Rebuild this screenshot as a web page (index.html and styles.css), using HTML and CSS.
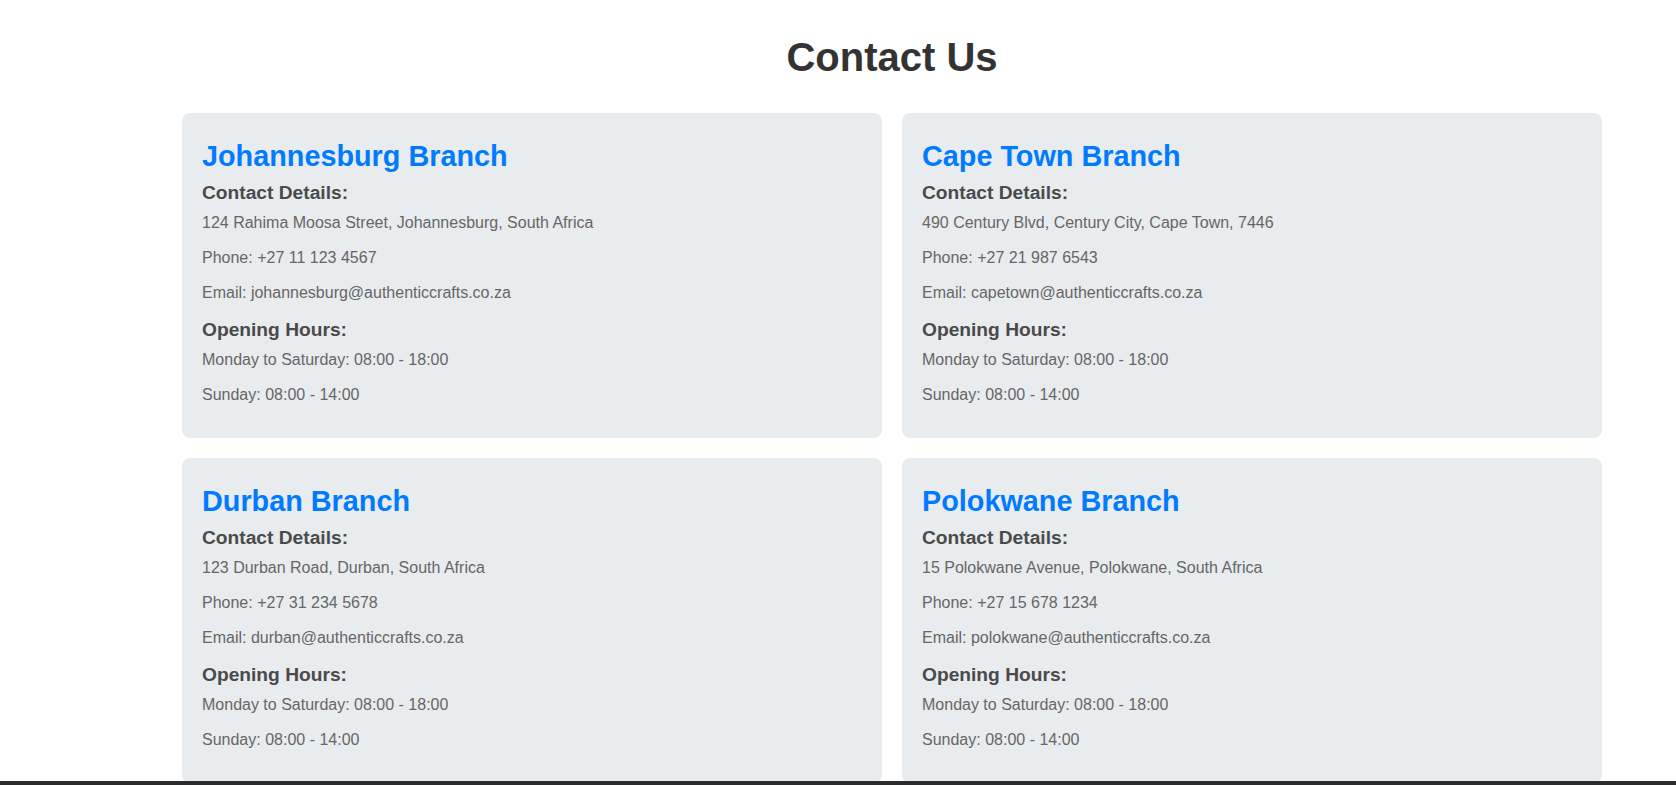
FILE: index.html
```html
<!DOCTYPE html>
<html lang="en">
<head>
<meta charset="utf-8">
<title>Contact Us</title>
<link rel="stylesheet" href="styles.css">
</head>
<body>
<main class="contact">
  <h1 class="page-title">Contact Us</h1>
  <div class="branches">
    <section class="branch">
      <h2 class="branch-name">Johannesburg Branch</h2>
      <h3 class="branch-sub">Contact Details:</h3>
      <p class="branch-text">124 Rahima Moosa Street, Johannesburg, South Africa</p>
      <p class="branch-text">Phone: +27 11 123 4567</p>
      <p class="branch-text">Email: johannesburg@authenticcrafts.co.za</p>
      <h3 class="branch-sub">Opening Hours:</h3>
      <p class="branch-text">Monday to Saturday: 08:00 - 18:00</p>
      <p class="branch-text">Sunday: 08:00 - 14:00</p>
    </section>
    <section class="branch">
      <h2 class="branch-name">Cape Town Branch</h2>
      <h3 class="branch-sub">Contact Details:</h3>
      <p class="branch-text">490 Century Blvd, Century City, Cape Town, 7446</p>
      <p class="branch-text">Phone: +27 21 987 6543</p>
      <p class="branch-text">Email: capetown@authenticcrafts.co.za</p>
      <h3 class="branch-sub">Opening Hours:</h3>
      <p class="branch-text">Monday to Saturday: 08:00 - 18:00</p>
      <p class="branch-text">Sunday: 08:00 - 14:00</p>
    </section>
    <section class="branch">
      <h2 class="branch-name">Durban Branch</h2>
      <h3 class="branch-sub">Contact Details:</h3>
      <p class="branch-text">123 Durban Road, Durban, South Africa</p>
      <p class="branch-text">Phone: +27 31 234 5678</p>
      <p class="branch-text">Email: durban@authenticcrafts.co.za</p>
      <h3 class="branch-sub">Opening Hours:</h3>
      <p class="branch-text">Monday to Saturday: 08:00 - 18:00</p>
      <p class="branch-text">Sunday: 08:00 - 14:00</p>
    </section>
    <section class="branch">
      <h2 class="branch-name">Polokwane Branch</h2>
      <h3 class="branch-sub">Contact Details:</h3>
      <p class="branch-text">15 Polokwane Avenue, Polokwane, South Africa</p>
      <p class="branch-text">Phone: +27 15 678 1234</p>
      <p class="branch-text">Email: polokwane@authenticcrafts.co.za</p>
      <h3 class="branch-sub">Opening Hours:</h3>
      <p class="branch-text">Monday to Saturday: 08:00 - 18:00</p>
      <p class="branch-text">Sunday: 08:00 - 14:00</p>
    </section>
  </div>
</main>
<footer class="site-footer"></footer>
</body>
</html>
```

FILE: styles.css
```css
html, body {
  margin: 0;
  padding: 0;
  background: #ffffff;
}

body {
  font-family: "Liberation Sans", Arial, sans-serif;
  font-size: 16px;
  color: #555555;
}

.contact {
  width: 1420px;
  margin: 0 0 0 182px;
  padding: 34px 0 40px;
}

.page-title {
  margin: 0 0 33px;
  text-align: center;
  font-size: 40px;
  line-height: 46px;
  font-weight: bold;
  color: #333333;
}

.branches {
  display: grid;
  grid-template-columns: 700px 700px;
  gap: 20px;
}

.branch {
  background: #e9ecef;
  border-radius: 8px;
  padding: 26px 20px 34px;
}

.branch-name {
  margin: 0 0 9px;
  font-size: 28.8px;
  line-height: 34px;
  font-weight: bold;
  color: #007bff;
}

.branch-sub {
  margin: 0 0 9px;
  font-size: 19.2px;
  line-height: 22px;
  font-weight: bold;
  color: #4a4a4a;
}

.branch-text {
  margin: 0 0 16px;
  line-height: 19.2px;
  color: #666666;
}

.branch-text:last-child {
  margin-bottom: 0;
}

.site-footer {
  position: fixed;
  left: 0;
  right: 0;
  bottom: 0;
  height: 4px;
  background: #2b2b2b;
}
```
